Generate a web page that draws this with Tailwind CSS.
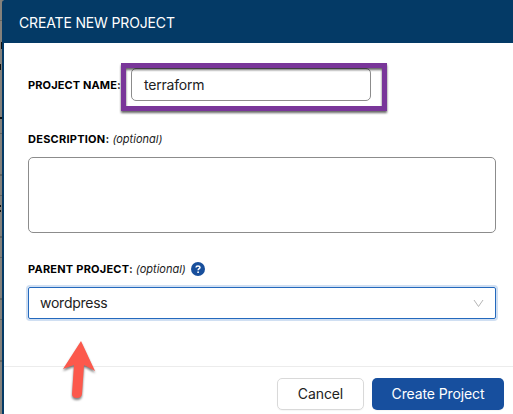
<!DOCTYPE html>
<html lang="en"><head><meta charset="utf-8"><title>Create New Project</title>
<script src="https://cdn.jsdelivr.net/npm/@tailwindcss/browser@4"></script></head>
<body class="w-[513px] h-[414px] overflow-hidden bg-[#85817b] font-[Inter,sans-serif] text-sm text-[#222]">
<div class="relative flex h-[414px]">
  <svg class="w-0.5 h-[414px] shrink-0" viewBox="0 0 2 414"><path fill="#67655f" d="M0 20h2v1H0zM0 133h2v1H0zM0 174h2v2H0zM0 195h2v1H0zM0 236h2v2H0zM0 257h2v1H0zM0 298h2v2H0zM0 319h2v1H0zM0 360h2v2H0z"/><path fill="#111" d="M1 42h1v7H1zM0 64h1v6H0zM0 117h2v2H0zM0 205h1v2H0zM0 210h1v2H0z"/></svg>
  <section class="flex flex-col w-[511px] rounded-tl-[3px] border-l-2 border-[#043a66] bg-white">
    <header class="h-[43px] shrink-0 bg-[#043a66] pl-[15px] leading-[45px] tracking-[-0.15px] text-white"><span>CREATE NEW PROJECT</span></header>
    <main class="flex flex-col h-[324px] shrink-0 pl-6 pt-[25px] border-b border-[#ececec]">
      <div class="flex items-center h-[33px]">
        <label class="w-[103px] pt-0.5 whitespace-nowrap text-[11px] font-bold text-black tracking-[0.12px]">PROJECT NAME:</label>
        <div class="w-[240px] h-[33px] rounded-[5px] border border-[#8c8c8c] pl-[12px] leading-[31px] tracking-[-0.2px]">terraform</div>
      </div>
      <div class="flex items-center gap-[3px] mt-[31px] h-4 text-[11px]"><span class="font-bold text-black tracking-[0.25px]">DESCRIPTION:</span><i>(optional)</i></div>
      <div class="mt-[9px] w-[468px] h-[76px] shrink-0 rounded-[5px] border border-[#8c8c8c]"></div>
      <div class="flex items-center gap-[3px] mt-[29px] h-4 text-[11px]"><span class="font-bold text-black tracking-[0.23px]">PARENT PROJECT:</span><i>(optional)</i>
        <svg class="w-[14px] h-[14px] ml-0.5 mb-0.5" viewBox="0 0 14 14"><circle cx="7" cy="7" r="7" fill="#184f9c"/><path d="M5 5.500Q5.100 3.900 7 3.900T9 5.400C9 6.700 7.200 6.600 7.100 8.300" fill="none" stroke="white" stroke-width="1.500"/><circle cx="7.100" cy="10.200" r=".9" fill="white"/></svg></div>
      <div class="flex items-center justify-between mt-[9px] w-[468px] h-8 shrink-0 rounded-[2px] border border-[#2469bd] ring-2 ring-[#d0dff2] pl-[11px] pr-[11px]"><span class="tracking-[-0.25px]">wordpress</span>
        <svg class="w-[11px] h-[9px]" viewBox="0 0 11 9"><path d="M1 1l4.500 6.500L10 1" fill="none" stroke="#b5b5b5"/></svg></div>
    </main>
    <footer class="flex h-[47px] pt-[11px] pl-[273px] gap-2">
      <button class="w-[87px] h-8 rounded-[5px] border border-[#d9d9d9] shadow-[0_1px_1px_#0000000a] tracking-[-0.1px]"><span>Cancel</span></button>
      <button class="w-[132px] h-8 rounded-[5px] bg-[#174f9e] text-white shadow-[0_1px_1px_#0000000a] tracking-[-0.12px]"><span>Create Project</span></button>
    </footer>
  </section>
  <div class="absolute left-[121px] top-[63px] w-[266px] h-[48px] border-[5px] border-[#793699] drop-shadow-[0_2px_1px_#00000099]"></div>
  <svg class="absolute left-[58px] top-[336px] w-[44px] h-[70px] drop-shadow-[0_2px_1px_#00000080]" viewBox="58 336 44 70"><path d="M81 341L95 371L84 365L82 394Q81.500 398 77 398Q72 398 72 394L74 365L63 369Z" fill="#fc594c"/></svg>
</div></body></html>
